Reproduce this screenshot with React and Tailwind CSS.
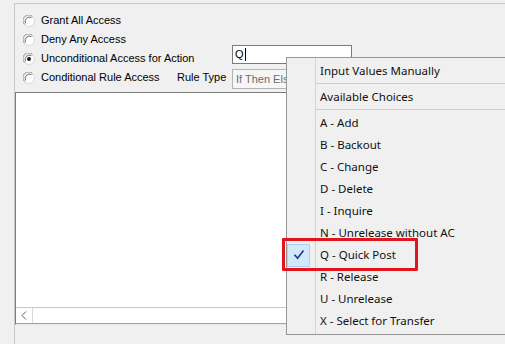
import React from "react";

function Radio({ checked }) {
  return (
    <svg width="12" height="12" viewBox="0 0 12 12" className="shrink-0">
      <circle cx="6" cy="6" r="5.5" fill="#ffffff" stroke="#d8d8d8" />
      <path d="M1.5 9.5 A5.5 5.5 0 0 1 9.5 1.5" fill="none" stroke="#9a9a9a" strokeWidth="1" />
      <path d="M2.6 8.4 A4.3 4.3 0 0 1 8.4 2.6" fill="none" stroke="#6a6a6a" strokeWidth="1" />
      {checked && <circle cx="6" cy="6" r="2" fill="#1a1a1a" />}
    </svg>
  );
}

function MenuItem({ label, checked }) {
  return (
    <div className="flex h-[22px] items-center">
      <div className="w-[28px] h-[22px] flex items-center shrink-0">
        {checked && (
          <div className="w-[23px] h-[23px] bg-[#d3e8fa] border border-[#a9d0f0] flex items-center justify-center">
            <svg width="12" height="12" viewBox="0 0 12 12">
              <path d="M2 6.3 L4.6 9.3 L10 2.2" fill="none" stroke="#1b3a8c" strokeWidth="1.6" strokeLinecap="square" />
            </svg>
          </div>
        )}
      </div>
      <div className="pl-[5px] whitespace-nowrap">{label}</div>
    </div>
  );
}

function Sep() {
  return (
    <div className="h-[3px] pl-[29px]">
      <div className="mt-[1px] border-t border-[#cdcdcd]" />
    </div>
  );
}

export default function App() {
  const items = [
    "A - Add",
    "B - Backout",
    "C - Change",
    "D - Delete",
    "I - Inquire",
    "N - Unrelease without AC",
    "Q - Quick Post",
    "R - Release",
    "U - Unrelease",
    "X - Select for Transfer",
  ];
  return (
    <div className="w-[505px] h-[344px] bg-[#f0f0f0] overflow-hidden relative font-['Liberation_Sans',Arial,sans-serif] text-[11px] text-black leading-none">
      <div className="ml-[14px] mt-[3px] w-[620px] h-[341px] border-l border-t border-[#c9c9c9] pt-[7px]">
        <div className="pl-[8px] flex flex-col">
          <div className="h-[19px] flex items-center">
            <Radio />
            <span className="ml-[6px]">Grant All Access</span>
          </div>
          <div className="h-[19px] flex items-center">
            <Radio />
            <span className="ml-[6px]">Deny Any Access</span>
          </div>
          <div className="h-[19px] flex items-center">
            <Radio checked />
            <span className="ml-[6px] w-[191px] whitespace-nowrap">Unconditional Access for Action</span>
            <div className="self-start -mt-[4px] w-[120px] h-[19px] bg-white border border-[#7a7a7a] flex items-center pl-[2px]">
              <span>Q</span>
              <span className="w-[1px] h-[13px] bg-black ml-[1px]" />
            </div>
          </div>
          <div className="h-[19px] flex items-center">
            <Radio />
            <span className="ml-[6px] w-[136px] whitespace-nowrap">Conditional Rule Access</span>
            <span className="w-[55px] whitespace-nowrap">Rule Type</span>
            <div className="self-start mt-[1px] w-[140px] h-[20px] bg-[#f6f6f6] border border-[#b4b4b4] flex items-center pl-[3px] text-[#6d6d6d]">
              If Then Else
            </div>
          </div>
        </div>
        <div className="mt-[5px] w-[470px] h-[233px] flex flex-col border-t border-l border-[#7c7c7c] border-b border-b-[#e8e8e8]">
          <div className="h-[214px] bg-white" />
          <div className="h-[17px] flex bg-[#ffffff] border-t border-[#c8c8c8] border-b border-b-[#a0a0a0]">
            <div className="w-[17px] h-full border-r border-[#d8d8d8] flex items-center justify-center">
              <svg width="6" height="9" viewBox="0 0 6 9">
                <path d="M5 0.5 L1 4.5 L5 8.5" fill="none" stroke="#606060" strokeWidth="1" />
              </svg>
            </div>
            <div className="flex-1 bg-white" />
          </div>
        </div>
      </div>

      <div className="absolute left-[286px] top-[57px] w-[240px] h-[278px] border border-[#979797] pt-[2px] font-['Noto_Sans',sans-serif] text-[11.5px] text-[#111] bg-[linear-gradient(to_right,#f0f0f0_28px,#d4d4d4_28px,#d4d4d4_29px,#f0f0f0_29px)]">
        <MenuItem label="Input Values Manually" />
        <Sep />
        <MenuItem label="Available Choices" />
        <Sep />
        {items.map((l) => (
          <MenuItem key={l} label={l} checked={l === "Q - Quick Post"} />
        ))}
      </div>

      <div className="absolute left-[282px] top-[238px] w-[136px] h-[33px] border-[3px] border-[#e3141c] rounded-[1px]" />
    </div>
  );
}
